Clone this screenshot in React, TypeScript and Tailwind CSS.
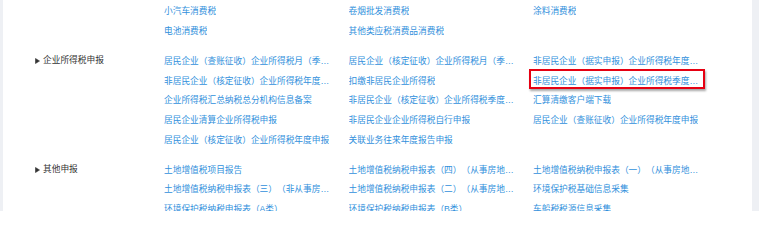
import React from 'react';

type Group = {
  label?: string;
  items: string[];
};

const groups: Group[] = [
  {
    items: ['小汽车消费税', '卷烟批发消费税', '涂料消费税', '电池消费税', '其他类应税消费品消费税'],
  },
  {
    label: '企业所得税申报',
    items: [
      '居民企业（查账征收）企业所得税月（季）度申报',
      '居民企业（核定征收）企业所得税月（季）度申报',
      '非居民企业（据实申报）企业所得税年度申报',
      '非居民企业（核定征收）企业所得税年度申报',
      '扣缴非居民企业所得税',
      '非居民企业（据实申报）企业所得税季度申报',
      '企业所得税汇总纳税总分机构信息备案',
      '非居民企业（核定征收）企业所得税季度申报',
      '汇算清缴客户端下载',
      '居民企业清算企业所得税申报',
      '非居民企业企业所得税自行申报',
      '居民企业（查账征收）企业所得税年度申报',
      '居民企业（核定征收）企业所得税年度申报',
      '关联业务往来年度报告申报',
    ],
  },
  {
    label: '其他申报',
    items: [
      '土地增值税项目报告',
      '土地增值税纳税申报表（四）（从事房地产开发的纳税人清算后尾盘销售适用）',
      '土地增值税纳税申报表（一）（从事房地产开发的纳税人预征适用）',
      '土地增值税纳税申报表（三）（非从事房地产开发的纳税人适用）',
      '土地增值税纳税申报表（二）（从事房地产开发的纳税人清算适用）',
      '环境保护税基础信息采集',
      '环境保护税纳税申报表（A类）',
      '环境保护税纳税申报表（B类）',
      '车船税税源信息采集',
    ],
  },
];

const highlighted = '非居民企业（据实申报）企业所得税季度申报';

function Arrow() {
  return (
    <svg width="5" height="6" viewBox="0 0 5 6" className="shrink-0">
      <path d="M0.5 0.5 L4.5 3 L0.5 5.5 Z" fill="#333" stroke="#333" strokeWidth="0.6" />
    </svg>
  );
}

export default function App() {
  return (
    <div
      className="flex h-[211px] w-[759px] overflow-hidden bg-white [text-spacing-trim:space-all]"
      style={{ fontFamily: '"Liberation Sans", "Noto Sans CJK SC", sans-serif' }}
    >
      <div className="w-[3px] shrink-0 bg-[#eef0f4]" />
      <div className="flex flex-1 flex-col gap-[9.8px] pt-[1.5px]">
        {groups.map((group, gi) => (
          <div key={gi} className="flex">
            <div className="w-[161px] shrink-0">
              {group.label && (
                <div className="flex h-[19.8px] items-center gap-[3px] pl-[32px] text-[8.7px] text-[#333]">
                  <Arrow />
                  <span>{group.label}</span>
                </div>
              )}
            </div>
            <div className="grid flex-1 grid-cols-[184.5px_184.5px_184.5px]">
              {group.items.map((item, i) => (
                <div key={i} className="relative flex h-[19.8px] items-center">
                  <a className="block max-w-[170px] cursor-pointer truncate text-[8.7px] leading-[12px] text-[#3190dc]">
                    {item}
                  </a>
                  {item === highlighted && (
                    <div className="pointer-events-none absolute -left-[4px] top-[-1.5px] h-[20px] w-[176px] border-2 border-[#e60012] shadow-[1px_2px_2px_rgba(0,0,0,0.35)]" />
                  )}
                </div>
              ))}
            </div>
          </div>
        ))}
      </div>
      <div className="w-[7px] shrink-0 bg-[#eef0f4]" />
    </div>
  );
}
